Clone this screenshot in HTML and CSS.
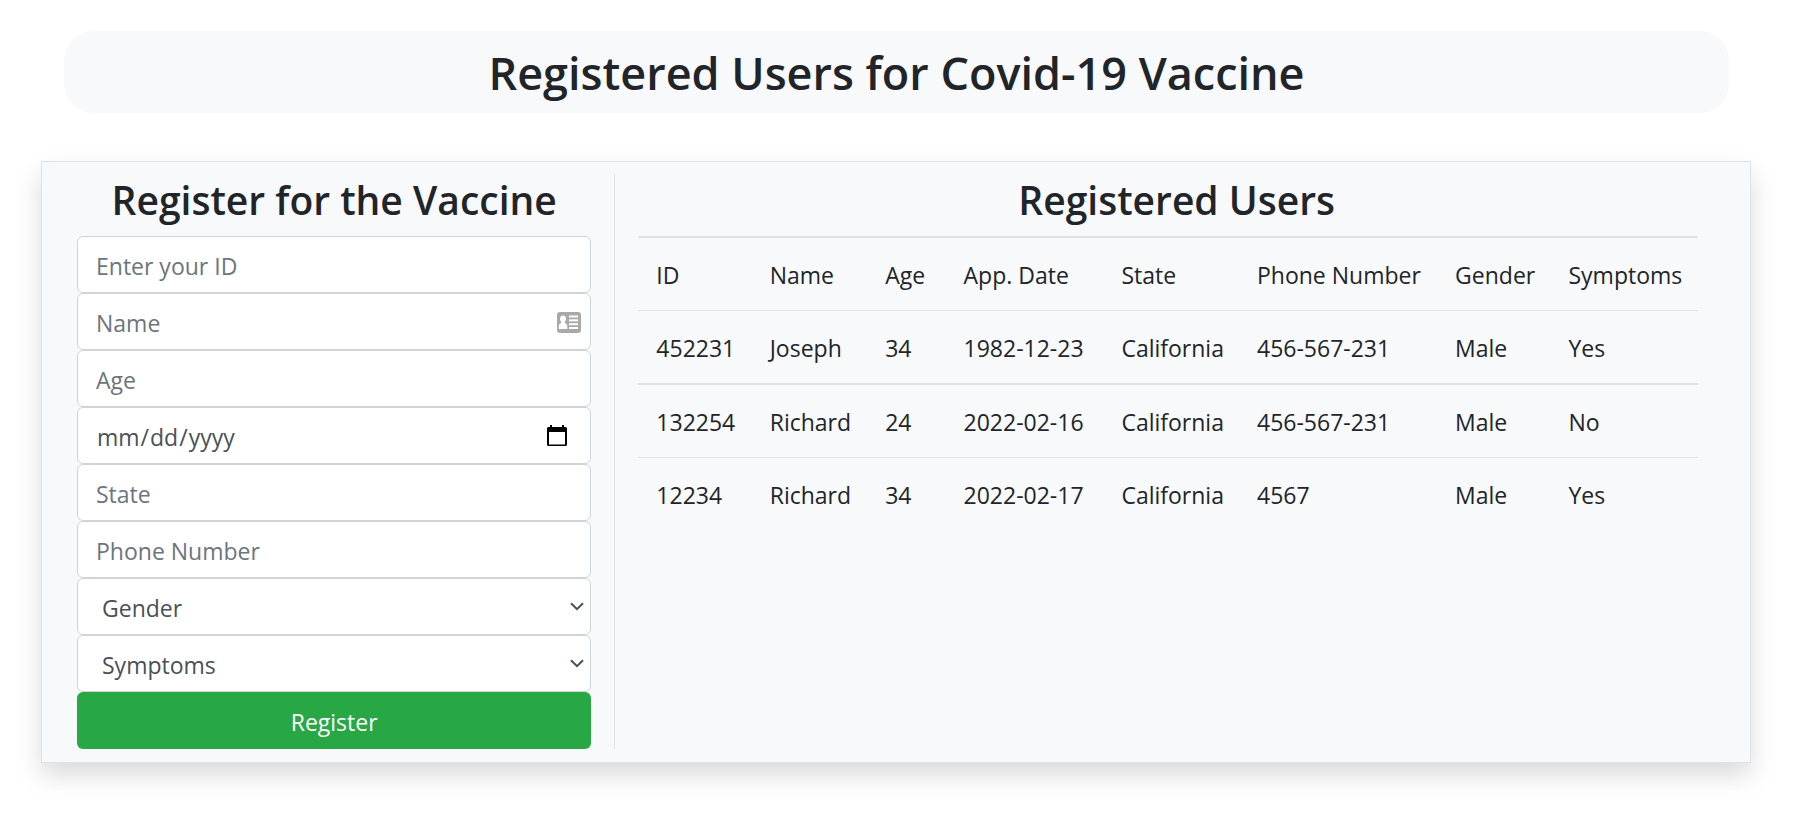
FILE: index.html
```html
<!DOCTYPE html>
<html lang="en-US">
<head>
<meta charset="utf-8">
<title>Registered Users for Covid-19 Vaccine</title>
<meta name="viewport" content="width=device-width, initial-scale=1">
<link rel="stylesheet" href="styles.css">
</head>
<body>
<header class="banner">
  <h1 class="banner-title">Registered Users for Covid-19 Vaccine</h1>
</header>
<main class="panel">
  <section class="register">
    <h2 class="section-title">Register for the Vaccine</h2>
    <form class="form">
      <div class="field"><input class="control" type="text" aria-label="ID" placeholder="Enter your ID"></div>
      <div class="field">
        <input class="control" type="text" aria-label="Name" placeholder="Name">
        <svg class="icon icon-card" viewBox="0 0 24 21" aria-hidden="true">
          <rect width="24" height="21" rx="3" fill="#a9a9a9"/>
          <g fill="#fff">
            <path d="M6 3.5c1.9 0 3 1.400 3 3.200 0 1.300-.5 2.400-1.200 3v1.300c1.700.6 2.500 1.500 2.500 3.300V17H1.800v-2.700c0-1.800.8-2.700 2.400-3.300V9.700C3.500 9.100 3 8 3 6.700 3 4.900 4.100 3.500 6 3.500z"/>
            <rect x="12" y="3.500" width="9" height="2"/>
            <rect x="12" y="7.300" width="9" height="2"/>
            <rect x="12" y="11.200" width="9" height="2"/>
            <rect x="12" y="15" width="9" height="2"/>
          </g>
        </svg>
      </div>
      <div class="field"><input class="control" type="text" aria-label="Age" placeholder="Age"></div>
      <div class="field">
        <input class="control control-date" type="date" aria-label="Appointment date">
        <svg class="icon icon-calendar" viewBox="0 0 20 21" aria-hidden="true">
          <path fill="#000" fill-rule="evenodd" d="M3 0h2v2h10V0h2v2h1.500A1.500 1.500 0 0 1 20 3.500v16a1.500 1.500 0 0 1-1.500 1.500h-17A1.500 1.500 0 0 1 0 19.500v-16A1.500 1.500 0 0 1 1.500 2H3zM2 7v12.500h16V7z"/>
        </svg>
      </div>
      <div class="field"><input class="control" type="text" aria-label="State" placeholder="State"></div>
      <div class="field"><input class="control" type="text" aria-label="Phone Number" placeholder="Phone Number"></div>
      <div class="field">
        <select class="control control-select" aria-label="Gender"><option>Gender</option><option>Male</option><option>Female</option></select>
        <svg class="icon icon-chevron" viewBox="0 0 14 9" aria-hidden="true"><path d="M1 1.200l6 6 6-6" fill="none" stroke="#495057" stroke-width="2"/></svg>
      </div>
      <div class="field">
        <select class="control control-select" aria-label="Symptoms"><option>Symptoms</option><option>Yes</option><option>No</option></select>
        <svg class="icon icon-chevron" viewBox="0 0 14 9" aria-hidden="true"><path d="M1 1.200l6 6 6-6" fill="none" stroke="#495057" stroke-width="2"/></svg>
      </div>
      <button class="submit" type="submit">Register</button>
    </form>
  </section>
  <section class="users">
    <h2 class="section-title">Registered Users</h2>
    <table class="table">
      <colgroup>
        <col class="col-id"><col class="col-name"><col class="col-age"><col class="col-date"><col class="col-state"><col class="col-phone"><col class="col-gender"><col class="col-symptoms">
      </colgroup>
      <thead>
        <tr><th>ID</th><th>Name</th><th>Age</th><th>App. Date</th><th>State</th><th>Phone Number</th><th>Gender</th><th>Symptoms</th></tr>
      </thead>
      <tbody>
        <tr><td>452231</td><td>Joseph</td><td>34</td><td>1982-12-23</td><td>California</td><td>456-567-231</td><td>Male</td><td>Yes</td></tr>
        <tr class="group-start"><td>132254</td><td>Richard</td><td>24</td><td>2022-02-16</td><td>California</td><td>456-567-231</td><td>Male</td><td>No</td></tr>
        <tr><td>12234</td><td>Richard</td><td>34</td><td>2022-02-17</td><td>California</td><td>4567</td><td>Male</td><td>Yes</td></tr>
      </tbody>
    </table>
  </section>
</main>
</body>
</html>
```
FILE: styles.css
```css
* {
  box-sizing: border-box;
}

body {
  margin: 0;
  padding: 31px 52px 48px 41px;
  background: #fff;
  color: #212529;
  font-family: "Segoe UI", "Open Sans", "Noto Sans", sans-serif;
  font-size: 23px;
  line-height: 36px;
}

.banner {
  margin: 0 22px 48px 23px;
  padding: 13px 12px 11px;
  border-radius: 30px;
  background: #f8f9fa;
}

.banner-title,
.section-title {
  margin: 0;
  font-weight: 600;
  text-align: center;
}

.banner-title {
  font-size: 45px;
  line-height: 58px;
}

.section-title {
  margin-bottom: 10px;
  font-size: 39px;
  line-height: 52px;
}

.panel {
  display: grid;
  grid-template-columns: 1fr 2fr;
  padding: 12px 12px 13px;
  border: 1px solid #dee2e6;
  background: #f8f9fa;
  box-shadow: 0 12px 24px rgba(0, 0, 0, 0.15);
}

.register {
  min-width: 0;
  padding: 0 23px;
  border-right: 1px solid #dee2e6;
}

.users {
  min-width: 0;
  padding: 0 23px;
}

.form {
  display: flex;
  flex-direction: column;
}

.field {
  position: relative;
  display: flex;
}

.control {
  width: 100%;
  height: 57px;
  padding: 10px 18px 8px;
  border: 1px solid #ced4da;
  border-radius: 6px;
  background: #fff;
  color: #495057;
  font: inherit;
}

.control::placeholder {
  color: #6c757d;
  opacity: 1;
}

.control-date::-webkit-calendar-picker-indicator {
  opacity: 0;
}

.control-select {
  padding-left: 24px;
  appearance: none;
}

.icon {
  position: absolute;
  pointer-events: none;
}

.icon-card {
  top: 19px;
  right: 10px;
  width: 24px;
  height: 21px;
}

.icon-calendar {
  top: 18px;
  right: 24px;
  width: 20px;
  height: 21px;
}

.icon-chevron {
  top: 24px;
  right: 7px;
  width: 14px;
  height: 9px;
}

.submit {
  height: 57px;
  padding: 10px 18px 8px;
  border: 0;
  border-radius: 6px;
  background: #28a745;
  color: #fff;
  font: inherit;
}

.table {
  width: 98.4%;
  table-layout: fixed;
  border-collapse: separate;
  border-spacing: 0;
}

.table th,
.table td {
  padding: 19px 0 17px 18px;
  border-top: 1px solid #dee2e6;
  font-weight: 400;
  text-align: left;
  white-space: nowrap;
}

.table th,
.table .group-start td {
  border-top-width: 2px;
}

.col-id { width: 10.7%; }
.col-name { width: 10.9%; }
.col-age { width: 7.4%; }
.col-date { width: 14.9%; }
.col-state { width: 12.8%; }
.col-phone { width: 18.7%; }
.col-gender { width: 10.7%; }
.col-symptoms { width: 13.9%; }
```
